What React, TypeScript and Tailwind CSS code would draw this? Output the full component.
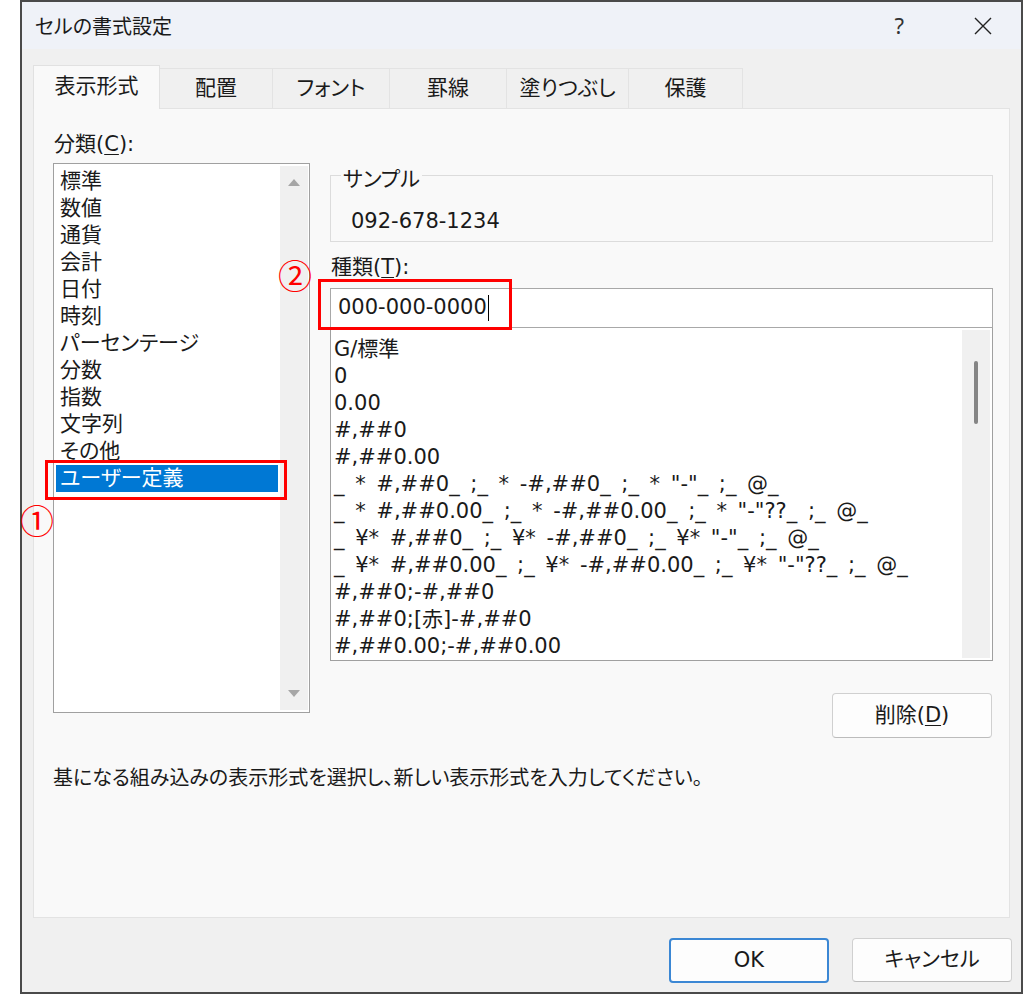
import type { ReactNode } from 'react';

const categories = ['標準', '数値', '通貨', '会計', '日付', '時刻', 'パーセンテージ', '分数', '指数', '文字列', 'その他', 'ユーザー定義'];

const formats = [
  'G/標準',
  '0',
  '0.00',
  '#,##0',
  '#,##0.00',
  '_ * #,##0_ ;_ * -#,##0_ ;_ * "-"_ ;_ @_',
  '_ * #,##0.00_ ;_ * -#,##0.00_ ;_ * "-"??_ ;_ @_',
  '_ ¥* #,##0_ ;_ ¥* -#,##0_ ;_ ¥* "-"_ ;_ @_',
  '_ ¥* #,##0.00_ ;_ ¥* -#,##0.00_ ;_ ¥* "-"??_ ;_ @_',
  '#,##0;-#,##0',
  '#,##0;[赤]-#,##0',
  '#,##0.00;-#,##0.00',
];

const tabs = [
  { label: '配置', w: 'w-[113px]' },
  { label: 'フォント', w: 'w-[117px]' },
  { label: '罫線', w: 'w-[117px]' },
  { label: '塗りつぶし', w: 'w-[122px]' },
  { label: '保護', w: 'w-[114px]' },
];

const Arrow = ({ down }: { down?: boolean }) => (
  <svg width="14" height="8" viewBox="0 0 14 8" className="mx-auto">
    <path d={down ? 'M1 0 H13 L7 7 Z' : 'M1 8 H13 L7 1 Z'} fill="#a6a6a6" />
  </svg>
);

const Mnemonic = ({ children }: { children: ReactNode }) => (
  <span className="underline decoration-1 underline-offset-[3px]">{children}</span>
);

export default function App() {
  return (
    <div className="relative h-[994px] w-[1024px] overflow-hidden bg-white text-[21px] text-[#1a1a1a] [font-family:'DejaVu_Sans','Noto_Sans_CJK_JP',sans-serif] [font-feature-settings:'palt']">
      <div className="ml-[20px] flex h-[994px] w-[1003px] flex-col border-2 border-[#4a4a4a] bg-[#f0f0f0]">
        {/* title bar */}
        <div className="flex h-[47px] shrink-0 items-center bg-[#eff2f8] pl-[13px] pr-[29px]">
          <span className="text-[20px] [font-family:'Noto_Sans_CJK_JP',sans-serif]">セルの書式設定</span>
          <span className="ml-auto text-[22px] text-[#333] [font-family:'Noto_Sans',sans-serif]">?</span>
          <svg width="18" height="18" viewBox="0 0 18 18" className="ml-[70px]">
            <path d="M1 1 L17 17 M17 1 L1 17" stroke="#222" strokeWidth="1.4" />
          </svg>
        </div>

        {/* tabs */}
        <div className="mt-[16px] flex items-end pl-[11px]">
          <div className="relative z-10 -mb-px flex h-[44px] w-[127px] items-center justify-center border-x border-t border-[#e1e1e1] bg-[#f9f9f9] pb-[2px]">
            表示形式
          </div>
          {tabs.map((t) => (
            <div
              key={t.label}
              className={`flex h-[40px] ${t.w} items-center justify-center border-r border-t border-[#e3e3e3] bg-[#f0f0f0]`}
            >
              {t.label}
            </div>
          ))}
        </div>

        {/* panel */}
        <div className="mx-[11px] flex h-[810px] shrink-0 flex-col border border-[#e3e3e3] bg-[#f9f9f9] pl-[19px] pt-[22px]">
          <div className="flex">
            {/* category column */}
            <div className="flex w-[257px] flex-col">
              <div className="h-[27px] pl-[1px] leading-[27px]">
                分類(<Mnemonic>C</Mnemonic>):
              </div>
              <div className="mt-[5px] flex h-[550px] border border-[#a0a0a0] bg-white">
                <div className="flex-1 pl-[2px] pt-[4px]">
                  {categories.map((c, i) => (
                    <div
                      key={c}
                      className={`h-[27px] pl-[4px] leading-[27px] ${i === categories.length - 1 ? 'bg-[#0078d4] text-white' : ''}`}
                    >
                      {c}
                    </div>
                  ))}
                </div>
                <div className="my-[2px] ml-[2px] mr-[1px] flex w-[28px] flex-col justify-between bg-[#f0f0f0] py-[12px]">
                  <Arrow />
                  <Arrow down />
                </div>
              </div>
            </div>

            {/* format column */}
            <div className="ml-[20px] flex w-[663px] flex-col">
              <fieldset className="mt-[30px] border border-[#dcdcdc] pb-[8px] pt-[20px]">
                <legend className="ml-[10px] px-[2px] pt-[8px] leading-[20px]">サンプル</legend>
                <div className="pl-[20px] leading-[24px]">092-678-1234</div>
              </fieldset>

              <div className="mt-[13px] pl-[1px] leading-[24px]">
                種類(<Mnemonic>T</Mnemonic>):
              </div>
              <div className="mt-[9px] flex h-[40px] items-center border border-[#a8a8a8] bg-white pl-[7px]">
                <span>000-000-0000</span>
                <span className="ml-[1px] h-[26px] w-px bg-black" />
              </div>
              <div className="flex h-[333px] overflow-hidden border border-t-0 border-[#a0a0a0] bg-white">
                <div className="flex-1 overflow-hidden pl-[3px] pt-[8px]">
                  {formats.map((f) => (
                    <div key={f} className="h-[27px] whitespace-pre leading-[27px] [word-spacing:4px]">
                      {f}
                    </div>
                  ))}
                </div>
                <div className="my-[2px] mr-[2px] flex w-[28px] justify-center bg-[#f0f0f0]">
                  <div className="mt-[31px] h-[63px] w-[4px] rounded-full bg-[#858585]" />
                </div>
              </div>

              <button className="ml-auto mr-[1px] mt-[32px] h-[45px] w-[160px] rounded-[4px] border border-[#d0d0d0] border-b-[#bcbcbc] bg-[#fdfdfd]">
                削除(<Mnemonic>D</Mnemonic>)
              </button>
            </div>
          </div>

          <div className="mt-[28px] text-[20px] leading-[24px]">
            基になる組み込みの表示形式を選択し、新しい表示形式を入力してください。
          </div>
        </div>

        {/* footer buttons */}
        <div className="mt-[20px] flex justify-end gap-[23px] pr-[9px]">
          <button className="h-[45px] w-[160px] rounded-[4px] border-2 border-[#3b87d4] bg-[#fdfdfd]">OK</button>
          <button className="h-[44px] w-[160px] rounded-[4px] border border-[#d0d0d0] border-b-[#bcbcbc] bg-[#fdfdfd]">
            キャンセル
          </button>
        </div>
      </div>

      {/* annotations */}
      <div className="absolute left-[45px] top-[460px] h-[40px] w-[242px] border-[3px] border-[#ff0000]" />
      <div className="absolute left-[20px] top-[500px] text-[34px] leading-[40px] text-[#ff0000] [font-family:'Noto_Sans_CJK_JP',sans-serif]">①</div>
      <div className="absolute left-[318px] top-[279px] h-[51px] w-[194px] border-[3px] border-[#ff0000]" />
      <div className="absolute left-[278px] top-[255px] text-[34px] leading-[40px] text-[#ff0000] [font-family:'Noto_Sans_CJK_JP',sans-serif]">②</div>
    </div>
  );
}
